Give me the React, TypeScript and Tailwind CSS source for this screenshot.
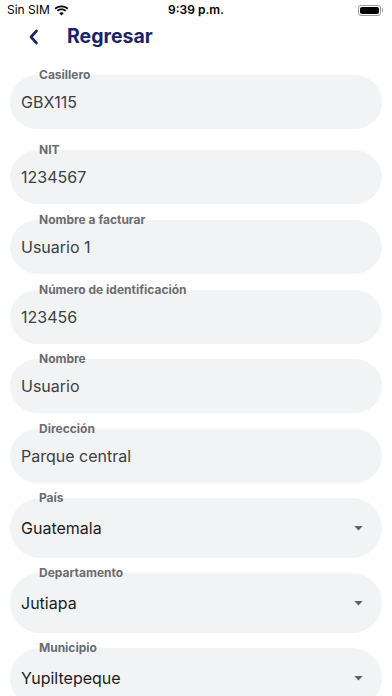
import React from "react";

type FieldProps = { label: string; value: string; mt: string; dropdown?: boolean };

function Field({ label, value, mt, dropdown }: FieldProps) {
  return (
    <div className={`relative ${mt} ${dropdown ? "h-[60px]" : "h-[54px]"} rounded-full bg-[#f2f3f5] flex items-center pl-[11px] pr-[19px]`}>
      <span className="absolute left-[29px] top-[-8px] text-[12px] leading-[16px] font-bold text-[#6a6c71]">{label}</span>
      <span className={`flex-1 text-[16px] ${dropdown ? "text-[#1c1c1e]" : "text-[#3c3f44]"}`}>{value}</span>
      {dropdown && (
        <svg width="9" height="5" viewBox="0 0 10 6">
          <path d="M0 0 L10 0 L5 5.5 Z" fill="#5f6166" />
        </svg>
      )}
    </div>
  );
}

export default function App() {
  return (
    <div className="w-[392px] h-[696px] overflow-hidden bg-white" style={{ fontFamily: "Inter, 'Noto Sans', sans-serif" }}>
      {/* status bar */}
      <div className="h-[20px] flex items-center px-[7px] relative text-[12px] text-black">
        <div className="flex items-center gap-[4px]">
          <span>Sin SIM</span>
          <svg width="15" height="11" viewBox="0 0 15 11">
            <path d="M7.5 2.2c2.2 0 4.2 0.8 5.7 2.2l1.2-1.3C12.6 1.4 10.2 0.5 7.5 0.5S2.4 1.4 0.6 3.1l1.2 1.3C3.3 3 5.3 2.2 7.5 2.2z" fill="#000" />
            <path d="M7.5 5.2c1.4 0 2.6 0.5 3.6 1.3l1.2-1.3C11 4.1 9.3 3.5 7.5 3.5S4 4.1 2.7 5.2l1.2 1.3C4.9 5.7 6.1 5.2 7.5 5.2z" fill="#000" />
            <path d="M7.5 10.5L9.8 8c-0.6-0.5-1.4-0.8-2.3-0.8S5.8 7.5 5.2 8z" fill="#000" />
          </svg>
        </div>
        <span className="absolute left-0 right-0 text-center font-semibold pointer-events-none">9:39 p.m.</span>
        <div className="ml-auto flex items-center mr-[2px]">
          <div className="w-[23px] h-[11px] rounded-[3px] border border-[#9a9a9a] p-[1px]">
            <div className="w-full h-full rounded-[2px] bg-black" />
          </div>
          <div className="w-[1.5px] h-[4px] rounded-r bg-[#9a9a9a] ml-[1px]" />
        </div>
      </div>
      {/* header */}
      <div className="h-[34px] flex items-center">
        <svg width="12" height="16" viewBox="0 0 12 16" className="ml-[28px]">
          <path d="M8.5 2 L3 8 L8.5 14" stroke="#1b2366" strokeWidth="2.6" fill="none" strokeLinecap="round" strokeLinejoin="round" />
        </svg>
        <span className="ml-[27px] text-[19.5px] font-bold text-[#1b2366]">Regresar</span>
      </div>
      <div className="flex flex-col px-[10px]">
        <Field label="Casillero" value="GBX115" mt="mt-[21px]" />
        <Field label="NIT" value="1234567" mt="mt-[21px]" />
        <Field label="Nombre a facturar" value="Usuario 1" mt="mt-[16px]" />
        <Field label="Número de identificación" value="123456" mt="mt-[16px]" />
        <Field label="Nombre" value="Usuario" mt="mt-[15px]" />
        <Field label="Dirección" value="Parque central" mt="mt-[16px]" />
        <Field label="País" value="Guatemala" mt="mt-[15px]" dropdown />
        <Field label="Departamento" value="Jutiapa" mt="mt-[15px]" dropdown />
        <Field label="Municipio" value="Yupiltepeque" mt="mt-[15px]" dropdown />
      </div>
    </div>
  );
}
